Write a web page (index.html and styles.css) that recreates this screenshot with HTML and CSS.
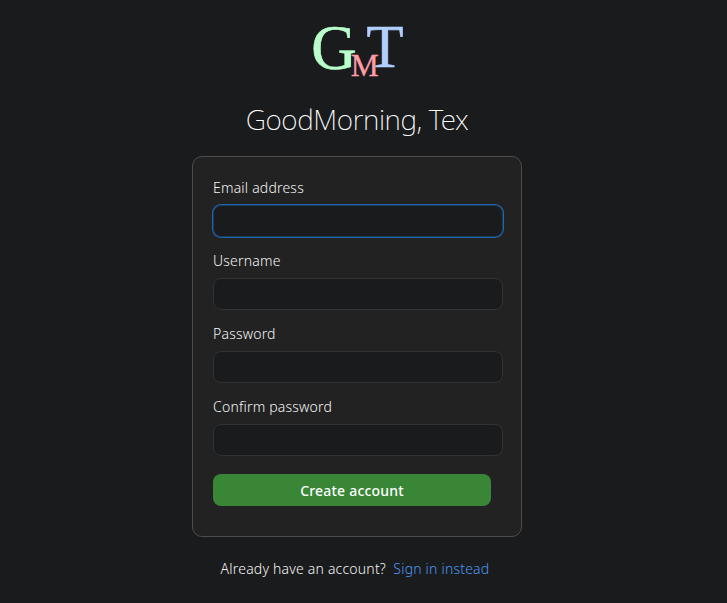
FILE: index.html
```html
<!DOCTYPE html>
<html lang="en">
<head>
<meta charset="utf-8">
<title>GoodMorning, Tex</title>
<link rel="stylesheet" href="styles.css">
</head>
<body>
<main class="page">
  <svg class="logo" width="92" height="54" viewBox="0 0 92 54" role="img">
    <text class="logo-g" x="0.3" y="44" textLength="45.5" lengthAdjust="spacingAndGlyphs">G</text>
    <text class="logo-m" x="39.7" y="50.5" textLength="28" lengthAdjust="spacingAndGlyphs">M</text>
    <text class="logo-t" x="55.5" y="42.3" textLength="37" lengthAdjust="spacingAndGlyphs">T</text>
  </svg>
  <h1 class="title">GoodMorning, Tex</h1>
  <form class="card">
    <label class="label" for="email">Email address</label>
    <input class="field field-active" id="email" type="email">
    <label class="label" for="username">Username</label>
    <input class="field" id="username" type="text">
    <label class="label" for="password">Password</label>
    <input class="field" id="password" type="password">
    <label class="label" for="confirm">Confirm password</label>
    <input class="field" id="confirm" type="password">
    <button class="submit" type="button">Create account</button>
  </form>
  <p class="footer">Already have an account? <a class="link" href="#">Sign in instead</a></p>
</main>
</body>
</html>
```
FILE: styles.css
```css
* { box-sizing: border-box; }
body {
  margin: 0;
  background: #1a1b1c;
  color: #f4f4f4;
  font-family: "Noto Sans", sans-serif;
  font-size: 14px;
  font-weight: 300;
  letter-spacing: 0.2px;
}
.page {
  display: flex;
  flex-direction: column;
  align-items: center;
  width: 714px;
  height: 603px;
  padding-top: 25px;
  overflow: hidden;
}
.logo { display: block; overflow: visible; font-family: "Liberation Serif", serif; letter-spacing: 0; }
.logo-g { font-size: 64px; fill: #b9ffcb; stroke: #b9ffcb; stroke-width: 0.6; }
.logo-m { font-size: 32px; fill: #ff9da6; stroke: #ff9da6; stroke-width: 0.3; }
.logo-t { font-size: 61px; fill: #b0d0ff; stroke: #b0d0ff; stroke-width: 0.6; }
.title {
  margin: 19px 0 0;
  font-size: 28px;
  line-height: 42px;
  font-weight: 200;
  letter-spacing: -0.4px;
  color: #fff;
}
.card {
  display: flex;
  flex-direction: column;
  width: 330px;
  height: 381px;
  margin-top: 16px;
  padding: 19px 18px 0 20px;
  background: #222;
  border: 1px solid #4c4c4c;
  border-radius: 10px;
}
.label { line-height: 21px; margin-bottom: 8px; white-space: nowrap; padding-top: 1px; height: 21px; }
.field {
  width: 290px;
  height: 32px;
  flex: none;
  margin: 0 0 12px;
  padding: 5px 12px;
  background: #1a1b1c;
  border: 1px solid #303234;
  border-radius: 8px;
  color: inherit;
  font: inherit;
  outline: none;
}
.field-active { border-color: #1c3b5b; box-shadow: 0 0 0 1px #1f65ab; }
.submit {
  width: 278px;
  height: 32px;
  margin-top: 6px;
  padding: 0;
  border: 0;
  border-radius: 8px;
  background: #388636;
  color: #fff;
  font: 500 14px "Noto Sans", sans-serif;
  letter-spacing: 0.2px;
}
.footer { margin: 21px 0 0; padding-right: 4px; line-height: 22px; white-space: nowrap; }
.link { margin-left: 3.5px; color: #4c97f0; text-decoration: none; }
```
